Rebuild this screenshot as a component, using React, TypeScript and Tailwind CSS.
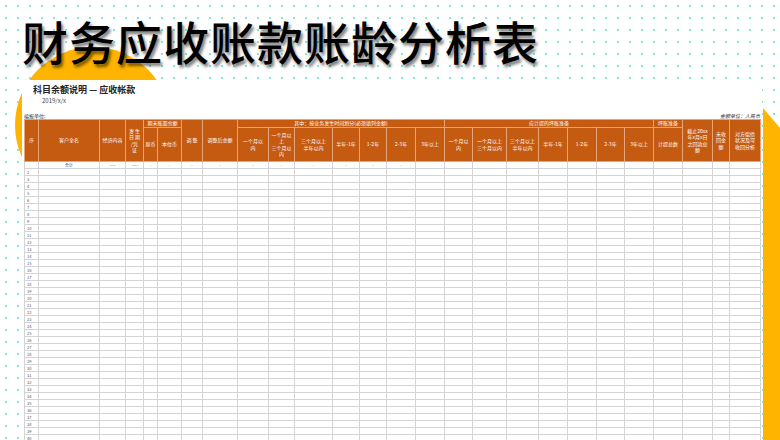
const widths = [14, 61, 26, 18, 14, 24, 21, 35, 31, 26, 38, 27, 27, 29, 29, 28, 34, 32, 29, 29, 28, 29, 29, 30, 17, 31];

const th = 'border border-[#e8a57a] bg-[#c55a11] text-white font-normal text-center align-middle leading-[1.25] text-[5px] p-0';

export default function App() {
  const rows = Array.from({ length: 39 }, (_, i) => i + 2);
  return (
    <div
      className="relative w-[780px] h-[440px] overflow-hidden bg-white bg-[radial-gradient(#7fe6d8_0.7px,transparent_1px)] bg-[size:12px_12px]"
      style={{ fontFamily: '"Noto Sans CJK SC", "Liberation Sans", sans-serif' }}
    >
      <div className="absolute left-[15px] top-[47px] w-[156px] h-[156px] rounded-full bg-[#ffb400]" />
      <div className="absolute right-0 top-[108px] w-[17px] h-[340px] bg-[#ffb400] [clip-path:polygon(0_0,100%_20px,100%_100%,0_100%)]" />
      <div className="relative h-[80px] pl-[22px] pt-[10px]">
        <h1 className="text-[46px] font-medium leading-[60px] tracking-[1px] text-black [text-shadow:2px_3px_3px_rgba(0,0,0,0.5)]">
          财务应收账款账龄分析表
        </h1>
      </div>
      <div className="relative ml-[22px] w-[740px] h-[360px] bg-white pt-[4px]">
        <div className="pl-[11px] text-[9px] font-bold text-[#222] leading-[12px]">科目余额说明 — 应收帐款</div>
        <div className="pl-[20px] text-[6px] text-[#444] leading-[9px]">2019/x/x</div>
        <div className="flex justify-between pl-[2px] pr-[2px] mt-[7px] text-[5px] text-[#333] leading-[7px]">
          <span>编报单位:</span>
          <span className="italic">金额单位：人民币</span>
        </div>
        <table className="table-fixed border-collapse ml-[2px] w-[736px]">
          <colgroup>
            {widths.map((w, i) => (
              <col key={i} style={{ width: w }} />
            ))}
          </colgroup>
          <thead>
            <tr className="h-[8px]">
              <th rowSpan={2} className={th}>序</th>
              <th rowSpan={2} className={th}>客户全名</th>
              <th rowSpan={2} className={th}>经济内容</th>
              <th rowSpan={2} className={th}>发 生<br />日 期<br />/凭<br />证</th>
              <th colSpan={2} className={th}>期末账面余额</th>
              <th rowSpan={2} className={th}>调 整</th>
              <th rowSpan={2} className={th}>调整后金额</th>
              <th colSpan={7} className={th}>其中：按业务发生时间划分(必须填列金额)</th>
              <th colSpan={7} className={th}>应计提的坏账准备</th>
              <th className={th}>坏账准备</th>
              <th rowSpan={2} className={th}>截止20xx<br />年x月x日<br />之回款总<br />额</th>
              <th rowSpan={2} className={th}>未收<br />回金<br />额</th>
              <th rowSpan={2} className={th}>对方偿债<br />状况及可<br />收回分析</th>
            </tr>
            <tr className="h-[34px]">
              <th className={th}>原币</th>
              <th className={th}>本位币</th>
              <th className={th}>一个月以<br />内</th>
              <th className={th}>一个月以<br />上<br />三个月以<br />内</th>
              <th className={th}>三个月以上<br />半年以内</th>
              <th className={th}>半年-1年</th>
              <th className={th}>1-2年</th>
              <th className={th}>2-3年</th>
              <th className={th}>3年以上</th>
              <th className={th}>一个月以<br />内</th>
              <th className={th}>一个月以上<br />三个月以内</th>
              <th className={th}>三个月以上<br />半年以内</th>
              <th className={th}>半年-1年</th>
              <th className={th}>1-2年</th>
              <th className={th}>2-3年</th>
              <th className={th}>3年以上</th>
              <th className={th}>计提总数</th>
            </tr>
          </thead>
          <tbody className="text-[4px] text-[#555] leading-[6px]">
            <tr className="h-[7px]">
              {widths.map((_, i) => (
                <td key={i} className="border border-[#d4d4d4] p-0 text-center">
                  {i === 1 ? '合计' : i === 2 || i === 3 ? '——' : i >= 4 && i <= 13 ? '-' : ''}
                </td>
              ))}
            </tr>
            {rows.map((r) => (
              <tr key={r} className="h-[7px]">
                {widths.map((_, i) => (
                  <td key={i} className="border border-[#d4d4d4] p-0 pl-[2px] text-left">
                    {i === 0 ? r : ''}
                  </td>
                ))}
              </tr>
            ))}
          </tbody>
        </table>
      </div>
    </div>
  );
}
